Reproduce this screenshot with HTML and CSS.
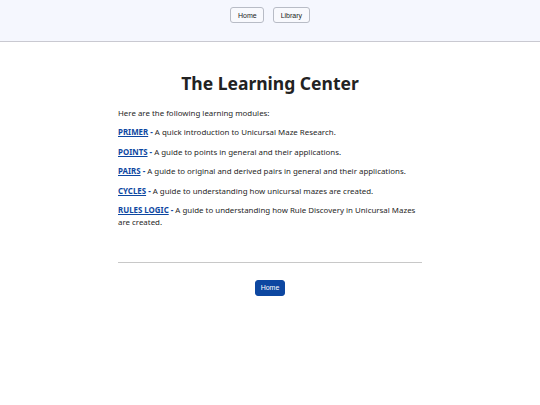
FILE: index.html
```html
<!DOCTYPE html>
<html lang="en">
<head>
<meta charset="utf-8">
<title>The Learning Center</title>
<link rel="stylesheet" href="styles.css">
</head>
<body>
<header class="topbar">
  <nav class="nav">
    <button class="nav-btn">Home</button>
    <button class="nav-btn">Library</button>
  </nav>
</header>
<main class="content">
  <h1 class="title">The Learning Center</h1>
  <p>Here are the following learning modules:</p>
  <p><a href="#">PRIMER</a> <b>-</b> A quick introduction to Unicursal Maze Research.</p>
  <p><a href="#">POINTS</a> <b>-</b> A guide to points in general and their applications.</p>
  <p><a href="#">PAIRS</a> <b>-</b> A guide to original and derived pairs in general and their applications.</p>
  <p><a href="#">CYCLES</a> <b>-</b> A guide to understanding how unicursal mazes are created.</p>
  <p><a href="#">RULES LOGIC</a> <b>-</b> A guide to understanding how Rule Discovery in Unicursal Mazes are created.</p>
  <hr class="divider">
  <div class="footer-actions">
    <button class="primary-btn">Home</button>
  </div>
</main>
</body>
</html>
```
FILE: styles.css
```css
html, body {
  margin: 0;
  padding: 0;
  background: #ffffff;
}
body {
  font-family: "Noto Sans", "Open Sans", sans-serif;
  color: #1f1f1f;
}
.topbar {
  background: #f5f7fe;
  border-bottom: 1px solid #c9c9d1;
  height: 42px;
  box-sizing: border-box;
}
.nav {
  display: flex;
  justify-content: center;
  gap: 9px;
  padding-top: 7px;
}
.nav-btn {
  font-family: "Liberation Sans", Arial, sans-serif;
  font-size: 7px;
  color: #222;
  background: #f8f9fd;
  border: 1px solid #b8bcc6;
  border-radius: 3px;
  height: 16px;
  padding: 0 6.5px;
}
.content {
  width: 304px;
  margin: 0 auto;
  padding-top: 28px;
  font-size: 7.9px;
  line-height: 12px;
}
.title {
  font-size: 17.5px;
  font-weight: 700;
  text-align: center;
  margin: 0 0 11px;
  line-height: 26px;
  color: #222;
}
.content p {
  margin: 0 0 7.4px;
}
.content a {
  color: #0d47a1;
  font-weight: 700;
}
.content b {
  color: #0d47a1;
}
.divider {
  border: 0;
  border-top: 1px solid #c8c8c8;
  margin: 34px 0 17px;
}
.footer-actions {
  display: flex;
  justify-content: center;
}
.primary-btn {
  font-family: "Liberation Sans", Arial, sans-serif;
  font-size: 7px;
  color: #ffffff;
  background: #0d47a1;
  border: 1px solid #0d47a1;
  border-radius: 3px;
  height: 16px;
  padding: 0 5px;
}
```
